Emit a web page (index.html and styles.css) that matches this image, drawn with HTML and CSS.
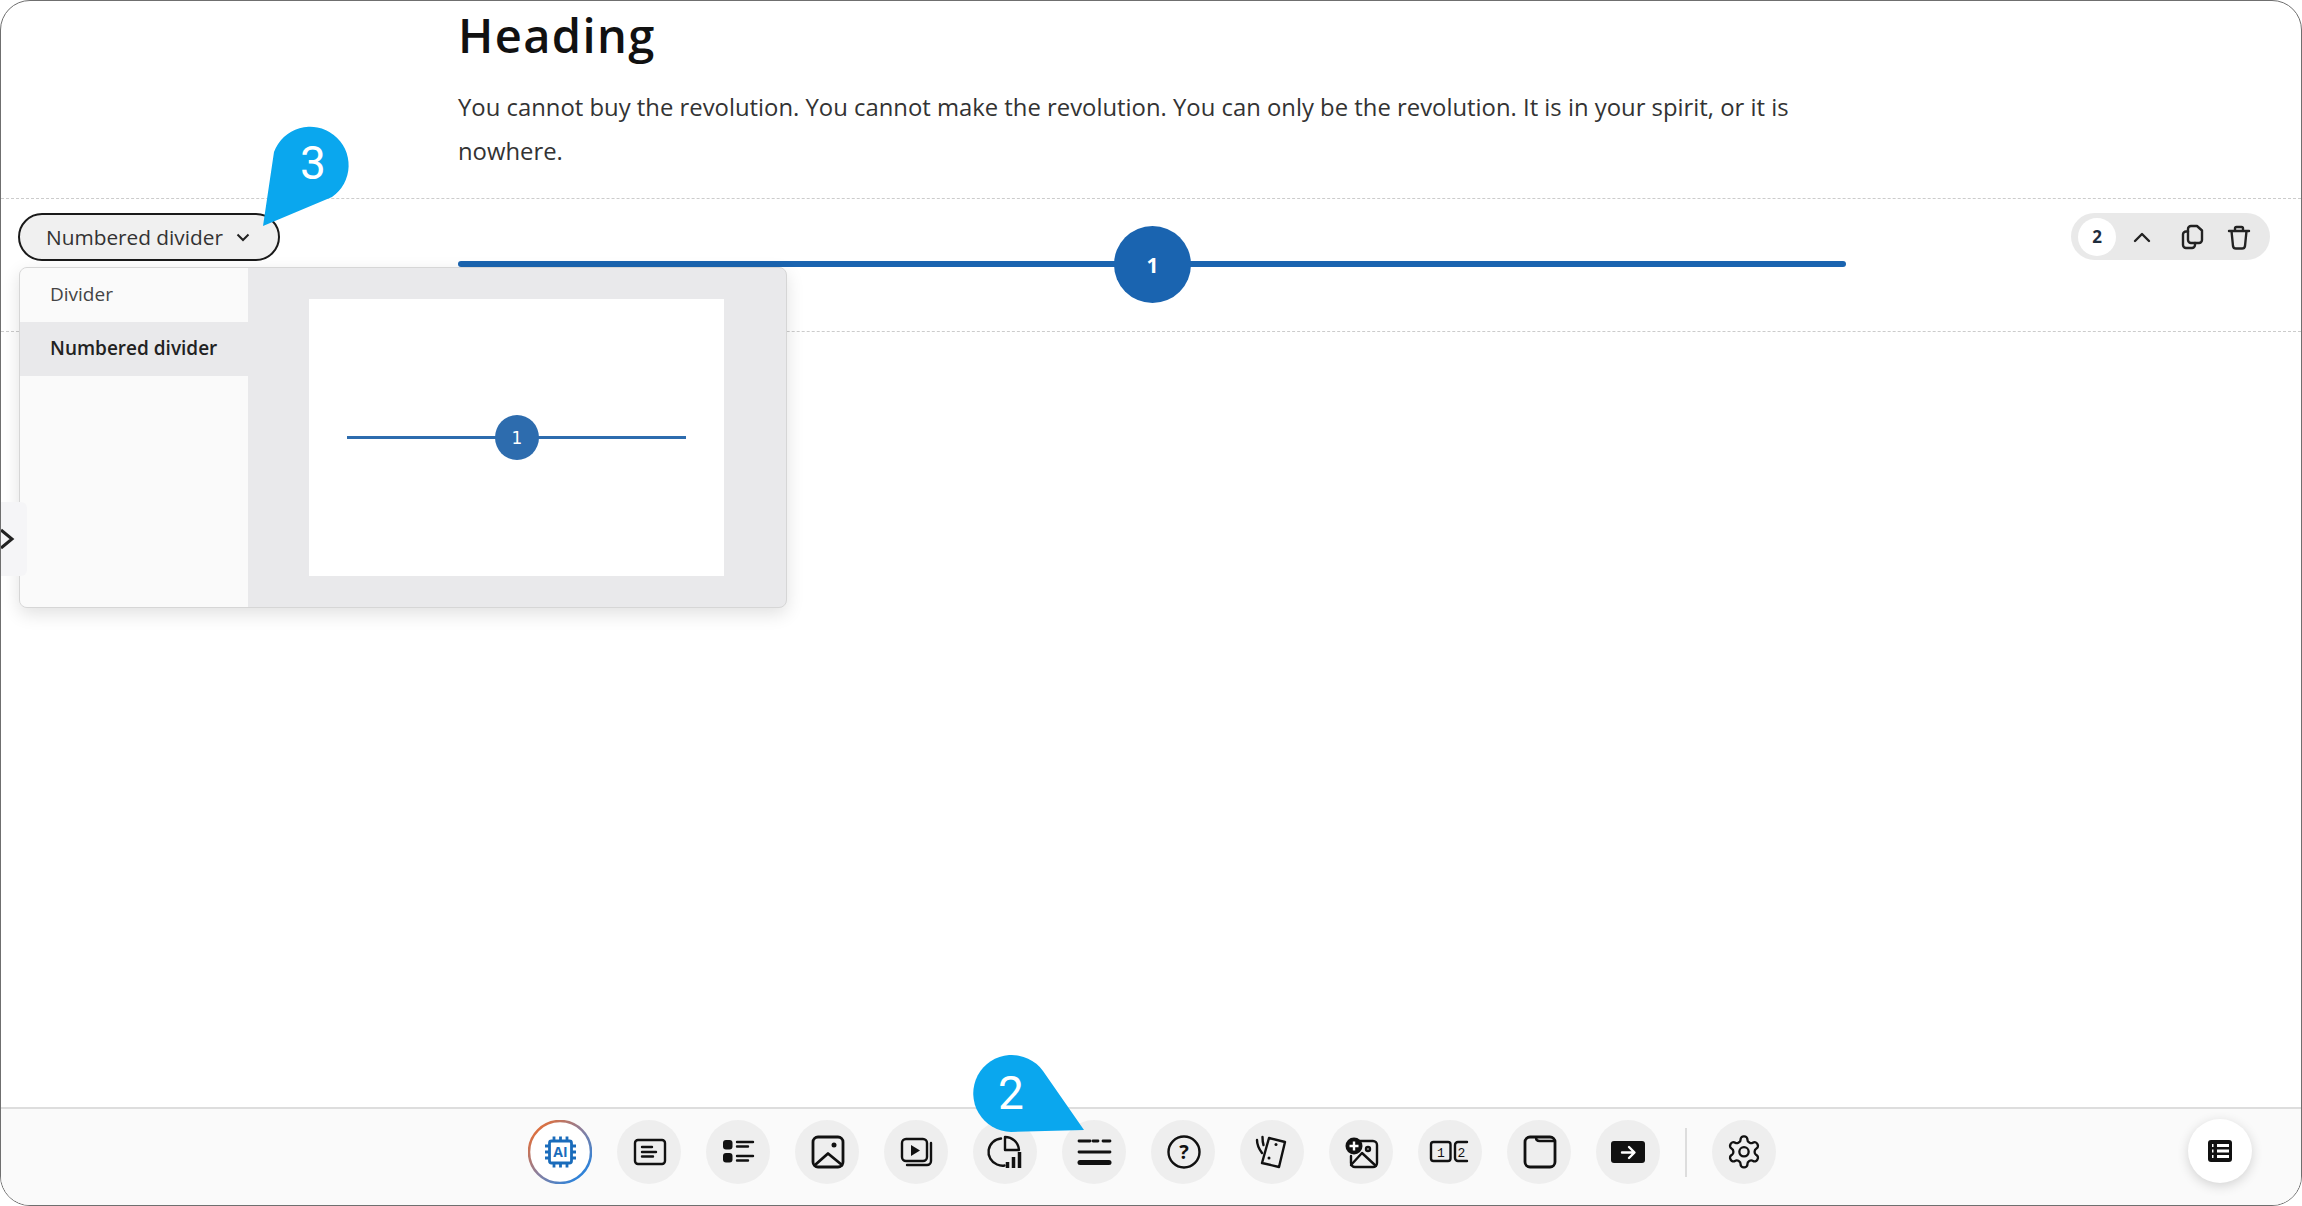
FILE: index.html
```html
<!DOCTYPE html>
<html lang="en">
<head>
<meta charset="utf-8">
<title>Numbered divider</title>
<link rel="stylesheet" href="styles.css">
</head>
<body>
<div class="frame">
  <main class="main">
    <section class="text-block">
      <h1 class="heading">Heading</h1>
      <p class="para">You cannot buy the revolution. You cannot make the revolution. You can only be the revolution. It is in your spirit, or it is nowhere.</p>
    </section>
    <section class="divider-row">
      <div class="row-left">
        <button class="type-pill">Numbered divider
          <svg class="pill-chev" viewBox="0 0 16 16"><path d="M2.5 5.5 8 11l5.5-5.5"/></svg>
        </button>
      </div>
      <div class="row-center">
        <div class="big-line"></div>
        <div class="big-num">1</div>
      </div>
      <div class="row-right">
        <div class="controls">
          <span class="order">2</span>
          <svg class="ctl ctl-up" viewBox="0 0 32 32"><path class="ctl-s" d="M9 20l7-7 7 7"/></svg>
          <svg class="ctl ctl-copy" viewBox="0 0 32 32"><path class="ctl-s" d="M13 10.5H11a3 3 0 0 0-3 3V24a3 3 0 0 0 3 3h6a3 3 0 0 0 3-3v-2"/><path class="ctl-s" d="M16 5h6l5 4.5V19a3 3 0 0 1-3 3h-8a3 3 0 0 1-3-3V8a3 3 0 0 1 3-3z"/></svg>
          <svg class="ctl ctl-trash" viewBox="0 0 32 32"><path class="ctl-s" d="M6 10h20M12 10V7.500a1.500 1.500 0 0 1 1.500-1.500h5a1.500 1.500 0 0 1 1.500 1.500V10M8.500 10l1.500 15a3 3 0 0 0 3 2.500h6a3 3 0 0 0 3-2.500l1.500-15"/></svg>
        </div>
      </div>
    </section>
  </main>

  <div class="popover">
    <ul class="type-list">
      <li class="type-item">Divider</li>
      <li class="type-item is-active">Numbered divider</li>
    </ul>
    <div class="preview">
      <div class="preview-card">
        <div class="preview-line"></div>
        <div class="preview-num">1</div>
      </div>
    </div>
  </div>

  <div class="side-tab">
    <svg class="side-chev" viewBox="0 0 16 24"><path d="M0 3l11 9-11 9"/></svg>
  </div>

  <footer class="toolbar">
    <div class="tools">
      <span class="tool tool-ai"><svg viewBox="0 0 64 64"><defs><linearGradient id="ring" x1="0" y1="0" x2="1" y2="1"><stop offset="0" stop-color="#fb6a1c"/><stop offset=".5" stop-color="#8a7f9e"/><stop offset="1" stop-color="#0a84f0"/></linearGradient></defs><circle cx="32" cy="32" r="31" fill="#fff" stroke="url(#ring)" stroke-width="2.500"/><g class="ai-s"><rect x="21.500" y="21" width="22" height="22" rx="2"/><path d="M26 21v-4.500M32.500 21v-4.500M39 21v-4.500M26 43v4.500M32.500 43v4.500M39 43v4.500M21.500 26H17M21.500 32H17M21.500 38H17M43.500 26H48M43.500 32H48M43.500 38H48"/></g><text class="ai-t" x="32.500" y="37">AI</text></svg></span>

      <span class="tool"><svg viewBox="0 0 64 64"><rect class="s" x="18" y="20" width="30" height="24" rx="3"/><path class="s" d="M25 27h10M25 32h14M25 36.500h11"/></svg></span>

      <span class="tool"><svg viewBox="0 0 64 64"><rect class="f" x="17" y="20" width="9.500" height="9.500" rx="3"/><rect class="f" x="17" y="33" width="9.500" height="9.500" rx="3"/><path class="s" d="M31 22h16M31 26.500h11M31 36h16M31 40.500h11"/></svg></span>

      <span class="tool"><svg viewBox="0 0 64 64"><rect class="s w" x="18" y="17" width="30" height="30" rx="5"/><circle class="f" cx="39" cy="25" r="2.500"/><path class="s w" d="M20 45l13-11.500L47 45"/></svg></span>

      <span class="tool"><svg viewBox="0 0 64 64"><rect class="s" x="18" y="19" width="25" height="22" rx="4"/><path class="f" d="M27 25l9 5.500-9 5.500z"/><path class="s" d="M47 23v18a4 4 0 0 1-4 4H23"/></svg></span>

      <span class="tool"><svg viewBox="0 0 64 64"><path class="s" d="M28 18.500a13.500 13.500 0 0 0-4 26c2 .8 5 1.500 7.500 1"/><path class="s" d="M32 17a14 14 0 0 1 14 13H32z"/><path class="bar" d="M34.500 48v-6M40.500 48V37M46.500 48V32"/></svg></span>

      <span class="tool"><svg viewBox="0 0 64 64"><path class="s w" d="M17 21h11M31 21h5M41 21h7"/><path class="s w" d="M17 32h31"/><path class="thick" d="M18 42.500h29"/></svg></span>

      <span class="tool"><svg viewBox="0 0 64 64"><circle class="s" cx="33" cy="32" r="15.500"/><text class="q" x="33" y="38.500">?</text></svg></span>

      <span class="tool"><svg viewBox="0 0 64 64"><path class="s j" d="M29 18l16 4-6 25-17-4z"/><circle class="f" cx="36" cy="24.500" r="1.500"/><circle class="f" cx="29" cy="38" r="1.500"/><path class="s" d="M17 20c0 5 2 9 5 13M22.500 17c0 3 0 5 1 8"/></svg></span>

      <span class="tool"><svg viewBox="0 0 64 64"><path class="s" d="M28 21h16a4 4 0 0 1 4 4v18a4 4 0 0 1-4 4H26a4 4 0 0 1-4-4v-7"/><circle class="s" cx="39" cy="29" r="2"/><path class="s" d="M22 45l11-12 14 13"/><circle class="f" cx="25" cy="26" r="8.500"/><path class="plus" d="M25 21.500v9M20.500 26h9"/></svg></span>

      <span class="tool"><svg viewBox="0 0 64 64"><rect class="s" x="13" y="22" width="19.500" height="19" rx="2.500"/><text class="n" x="22.800" y="36.500">1</text><path class="s" d="M49 22H40a3 3 0 0 0-3 3v13a3 3 0 0 0 3 3h9"/><text class="n" x="43.500" y="36.500">2</text></svg></span>

      <span class="tool"><svg viewBox="0 0 64 64"><rect class="s w" x="18" y="17" width="30" height="30" rx="5"/><path class="s" d="M29 17.500c0 2.300 1.200 3.500 3.500 3.500H48"/></svg></span>

      <span class="tool"><svg viewBox="0 0 64 64"><rect class="f" x="15" y="21" width="34" height="22" rx="3"/><path class="arrow" d="M26 32.500h12M33 27l5.500 5.500L33 38"/></svg></span>

      <span class="tool-sep"></span>

      <span class="tool"><svg viewBox="0 0 64 64"><g transform="translate(13.400 13.200) scale(1.550)"><path class="gear" d="M12.220 2h-.44a2 2 0 0 0-2 2v.18a2 2 0 0 1-1 1.730l-.43.250a2 2 0 0 1-2 0l-.15-.08a2 2 0 0 0-2.730.73l-.22.380a2 2 0 0 0 .73 2.730l.15.100a2 2 0 0 1 1 1.720v.51a2 2 0 0 1-1 1.740l-.15.090a2 2 0 0 0-.73 2.730l.22.380a2 2 0 0 0 2.730.73l.15-.08a2 2 0 0 1 2 0l.43.250a2 2 0 0 1 1 1.730V20a2 2 0 0 0 2 2h.44a2 2 0 0 0 2-2v-.18a2 2 0 0 1 1-1.730l.43-.25a2 2 0 0 1 2 0l.15.080a2 2 0 0 0 2.730-.73l.22-.39a2 2 0 0 0-.73-2.730l-.15-.08a2 2 0 0 1-1-1.740v-.5a2 2 0 0 1 1-1.740l.15-.09a2 2 0 0 0 .73-2.730l-.22-.38a2 2 0 0 0-2.730-.73l-.15.080a2 2 0 0 1-2 0l-.43-.25a2 2 0 0 1-1-1.730V4a2 2 0 0 0-2-2z"/><circle class="gear" cx="12" cy="12" r="3"/></g></svg></span>
    </div>
    <span class="tool-table"><svg viewBox="0 0 64 64"><rect class="f" x="20" y="21" width="24" height="22" rx="3"/><path class="tbl" d="M24 26.500h1.500M29 26.500h12M24 32h1.500M29 32h12M24 37.500h1.500M29 37.500h12"/></svg></span>
  </footer>

  <svg class="callout callout-3" viewBox="0 0 100 110"><path class="callout-shape" d="M4 101 15 27A38.500 38.500 0 1 1 73 72z"/><text class="callout-num" x="54" y="54">3</text></svg>
  <svg class="callout callout-2" viewBox="0 0 120 90"><path class="callout-shape" d="M112 78 39 80A38.500 38.500 0 1 1 71 19z"/><text class="callout-num" x="39" y="57">2</text></svg>
</div>
</body>
</html>
```

FILE: styles.css
```css
* { box-sizing: border-box; }
html, body { margin: 0; height: 100%; background: #fff; }
body { font-family: "Open Sans", "Noto Sans", sans-serif; color: #222; }

.frame {
  position: relative;
  width: 2302px;
  height: 1206px;
  border: 1px solid #6f6f6f;
  border-radius: 30px;
  overflow: hidden;
  display: flex;
  flex-direction: column;
  background: #fff;
}

.main { flex: 1; }

.text-block { padding: 10px 0 0 457px; height: 197px; }
.heading { margin: 0; font-size: 47px; line-height: 48px; font-weight: 600; letter-spacing: 1.4px; color: #111; }
.para { margin: 26px 0 0; width: 1345px; font-size: 23.85px; line-height: 44px; color: #333; }

.divider-row {
  display: grid;
  grid-template-columns: 457px 1388px 1fr;
  height: 134px;
  border-top: 1px dashed #ccc;
  border-bottom: 1px dashed #ccc;
}
.row-left { padding: 14px 0 0 17px; }
.type-pill {
  display: flex;
  align-items: center;
  gap: 12px;
  width: 262px;
  height: 48px;
  padding: 0 0 0 26px;
  border: 2.5px solid #1a1a1a;
  border-radius: 24px;
  background: #f0f0f0;
  font: 400 20.8px "Open Sans", sans-serif;
  color: #333;
}
.pill-chev { width: 16px; height: 16px; fill: none; stroke: #222; stroke-width: 2; }

.row-center { position: relative; }
.big-line { height: 6px; margin-top: 62px; border-radius: 3px; background: #1a64b0; }
.big-num {
  position: absolute;
  left: 656px;
  top: 27px;
  width: 77px;
  height: 77px;
  border-radius: 50%;
  background: #1a64b0;
  color: #fff;
  font-size: 21px;
  font-weight: 700;
  display: flex;
  align-items: center;
  justify-content: center;
}

.row-right { display: flex; justify-content: flex-end; padding: 14px 31px 0 0; align-items: flex-start; }
.controls {
  display: flex;
  align-items: center;
  width: 199px;
  height: 47px;
  padding-left: 7px;
  border-radius: 24px;
  background: #e9e9e9;
}
.order {
  width: 38px;
  height: 38px;
  border-radius: 50%;
  background: #fff;
  font-size: 17px;
  font-weight: 700;
  display: flex;
  align-items: center;
  justify-content: center;
  color: #1f2d3d;
}
.ctl { width: 32px; height: 32px; }
.ctl-up { margin-left: 10px; }
.ctl-copy { margin-left: 17px; }
.ctl-trash { margin-left: 16px; }
.ctl-s { fill: none; stroke: #222; stroke-width: 2.400; stroke-linecap: round; stroke-linejoin: round; }

.popover {
  position: absolute;
  left: 18px;
  top: 266px;
  width: 768px;
  height: 341px;
  display: flex;
  border: 1px solid #d6d6d6;
  border-radius: 8px;
  overflow: hidden;
  background: #e9e9eb;
  box-shadow: 0 6px 18px rgba(0, 0, 0, .12);
}
.type-list { width: 228px; margin: 0; padding: 0; list-style: none; background: #fafafa; }
.type-item { height: 54px; padding-left: 30px; font-size: 19px; line-height: 53px; color: #444; }
.type-item.is-active { background: #e9e9eb; font-weight: 600; color: #222; }
.preview { flex: 1; padding: 31px 0 0 61px; }
.preview-card { position: relative; width: 415px; height: 277px; background: #fff; }
.preview-line { position: absolute; left: 38px; right: 38px; top: 137px; height: 3px; background: #2d6cae; }
.preview-num {
  position: absolute;
  left: 186px;
  top: 116px;
  width: 44px;
  height: 45px;
  border-radius: 50%;
  background: #2d6cae;
  color: #fff;
  font: 400 17px "DejaVu Sans", sans-serif;
  display: flex;
  align-items: center;
  justify-content: center;
}

.side-tab {
  position: absolute;
  left: 0;
  top: 501px;
  width: 26px;
  height: 74px;
  background: #f5f5f7;
  border-radius: 0 6px 6px 0;
  display: flex;
  align-items: center;
}
.side-chev { width: 16px; height: 24px; fill: none; stroke: #222; stroke-width: 3; }

.toolbar {
  position: relative;
  height: 98px;
  padding: 0 0 10px 2px;
  border-top: 2px solid #ddd;
  background: #fafafa;
  display: flex;
  align-items: center;
  justify-content: center;
}
.tools { display: flex; align-items: center; gap: 25px; }
.tool { width: 64px; height: 64px; border-radius: 50%; background: #eeeeee; display: block; }
.tool svg, .tool-table svg { display: block; width: 64px; height: 64px; }
.tool-ai { background: none; }
.tool-sep { width: 2px; height: 49px; background: #ddd; }
.tool-table {
  position: absolute;
  right: 49px;
  top: 10px;
  width: 64px;
  height: 64px;
  border-radius: 50%;
  background: #fff;
  box-shadow: 0 3px 12px rgba(0, 0, 0, .16);
}

.s { fill: none; stroke: #111; stroke-width: 2.400; stroke-linecap: round; stroke-linejoin: round; }
.s.w { stroke-width: 2.800; }
.s.j { stroke-width: 2.400; }
.f { fill: #111; }
.bar { fill: none; stroke: #111; stroke-width: 3.500; }
.thick { fill: none; stroke: #111; stroke-width: 5; stroke-linecap: round; }
.plus { fill: none; stroke: #fff; stroke-width: 2.400; }
.arrow { fill: none; stroke: #fff; stroke-width: 2.400; stroke-linecap: round; stroke-linejoin: round; }
.tbl { fill: none; stroke: #fff; stroke-width: 3; }
.gear { fill: none; stroke: #111; stroke-width: 1.500; stroke-linejoin: round; }
.q { font: 700 20px "Open Sans", sans-serif; fill: #111; text-anchor: middle; }
.n { font: 400 13px "Liberation Mono", monospace; fill: #111; text-anchor: middle; }
.ai-s { fill: none; stroke: #1a6cbb; stroke-width: 2.800; }
.ai-t { font: 700 14px "Open Sans", sans-serif; fill: #1a6cbb; text-anchor: middle; }

.callout { position: absolute; pointer-events: none; overflow: visible; }
.callout-shape { fill: #0aa7ee; }
.callout-num { font: 400 46px "Roboto", sans-serif; fill: #fff; text-anchor: middle; }
.callout-3 { left: 258px; top: 124px; width: 100px; height: 110px; }
.callout-2 { left: 971px; top: 1051px; width: 120px; height: 90px; }
```
